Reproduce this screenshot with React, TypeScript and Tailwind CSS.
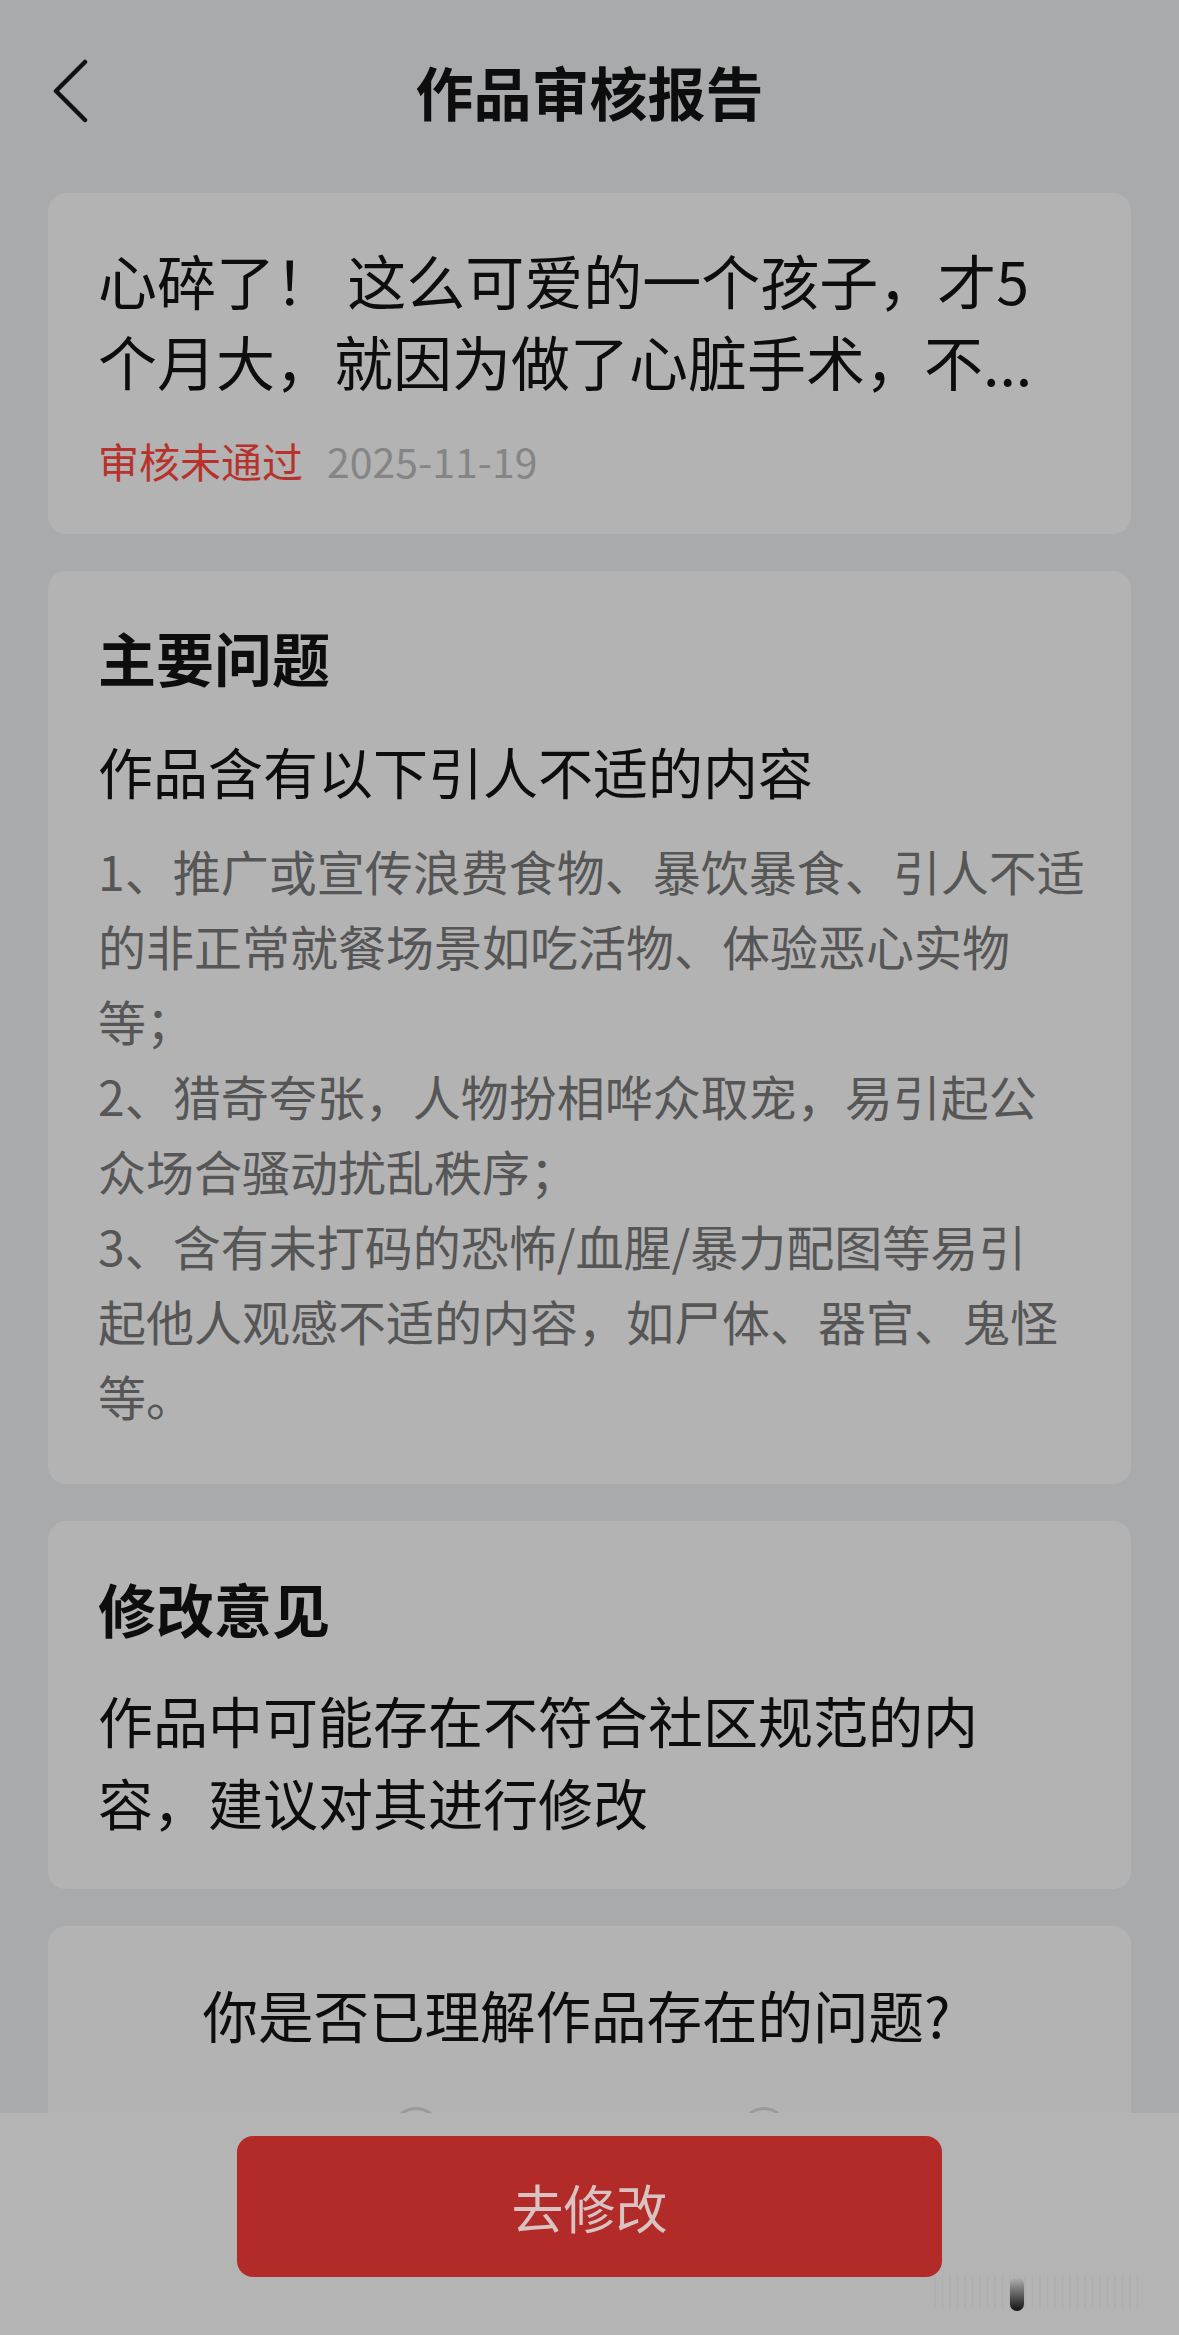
const bodyLines = [
  '1、推广或宣传浪费食物、暴饮暴食、引人不适',
  '的非正常就餐场景如吃活物、体验恶心实物',
  '等；',
  '2、猎奇夸张，人物扮相哗众取宠，易引起公',
  '众场合骚动扰乱秩序；',
  '3、含有未打码的恐怖/血腥/暴力配图等易引',
  '起他人观感不适的内容，如尸体、器官、鬼怪',
  '等。',
]

function BackIcon() {
  return (
    <svg width="40" height="64" viewBox="0 0 40 64" fill="none" aria-hidden="true">
      <path d="M35 3L6 32l29 29" stroke="#111" strokeWidth="4.5" strokeLinecap="round" strokeLinejoin="round" />
    </svg>
  )
}

export default function App() {
  return (
    <div className="relative h-[2335px] w-[1179px] overflow-hidden bg-[#a9aaac] font-['Noto_Sans_CJK_SC',sans-serif] text-[#0d0d0d]">
      {/* header */}
      <header className="relative flex h-[181px] items-center justify-center">
        <button className="absolute left-[50px] top-[59px]">
          <BackIcon />
        </button>
        <h1 className="text-[58px] font-bold leading-none">作品审核报告</h1>
      </header>

      <main className="flex flex-col gap-[37px] px-[48px] pt-[12px]">
        {/* work card */}
        <section className="rounded-[18px] bg-[#b3b3b3] px-[50px] pb-[46px] pt-[46px]">
          <div className="text-[59px] leading-[81px]">
            <p className="whitespace-nowrap">心碎了！ 这么可爱的一个孩子，才5</p>
            <p className="whitespace-nowrap">个月大，就因为做了心脏手术，不...</p>
          </div>
          <div className="mt-[31px] flex items-center gap-[24px] text-[41px] leading-[56px]">
            <span className="text-[#b8322d]">审核未通过</span>
            <span className="text-[#858585]">2025-11-19</span>
          </div>
        </section>

        {/* main problems */}
        <section className="rounded-[18px] bg-[#b3b3b3] px-[50px] pb-[51px] pt-[46px]">
          <h2 className="text-[58px] font-bold leading-[80px]">主要问题</h2>
          <p className="mt-[33px] text-[55px] leading-[80px]">作品含有以下引人不适的内容</p>
          <div className="mt-[23px] text-[48px] leading-[75px] text-[#565656]">
            {bodyLines.map((line, i) => (
              <p key={i} className="whitespace-nowrap">{line}</p>
            ))}
          </div>
        </section>

        {/* suggestion */}
        <section className="rounded-[18px] bg-[#b3b3b3] px-[50px] pb-[47px] pt-[47px]">
          <h2 className="text-[58px] font-bold leading-[80px]">修改意见</h2>
          <div className="mt-[30px] text-[55px] leading-[82px]">
            <p className="whitespace-nowrap">作品中可能存在不符合社区规范的内</p>
            <p className="whitespace-nowrap">容，建议对其进行修改</p>
          </div>
        </section>

        {/* question */}
        <section className="h-[400px] rounded-[18px] bg-[#b3b3b3] pt-[48px]">
          <p className="pr-[26px] text-center text-[55.5px] leading-[80px]">你是否已理解作品存在的问题?</p>
          <div className="mt-[53px] flex justify-center gap-[300px]">
            <span className="h-[48px] w-[48px] rounded-full border-[3px] border-[#9a9a9a]" />
            <span className="h-[48px] w-[48px] rounded-full border-[3px] border-[#9a9a9a]" />
          </div>
        </section>
      </main>

      {/* bottom bar */}
      <div className="absolute inset-x-0 bottom-0 h-[222px] bg-[#b4b4b4] pt-[23px]">
        <button className="mx-auto flex h-[141px] w-[705px] items-center justify-center rounded-[16px] bg-[#b22b28] text-[52px] leading-none text-[#d9c3c2]">
          去修改
        </button>
        <svg className="absolute left-[930px] top-[160px]" width="220" height="40" viewBox="0 0 220 40" aria-hidden="true">
          <defs>
            <linearGradient id="bar" x1="0" y1="0" x2="0" y2="1">
              <stop offset="0" stopColor="#b4b4b4" />
              <stop offset="1" stopColor="#111" />
            </linearGradient>
          </defs>
          {Array.from({ length: 28 }).map((_, i) => (
            <rect key={i} x={i * 7.5 + 4} y="2" width="2" height="34" fill="#a6a6a6" opacity="0.35" />
          ))}
          <rect x="80" y="4" width="14" height="34" rx="7" fill="url(#bar)" />
        </svg>
      </div>
    </div>
  )
}
